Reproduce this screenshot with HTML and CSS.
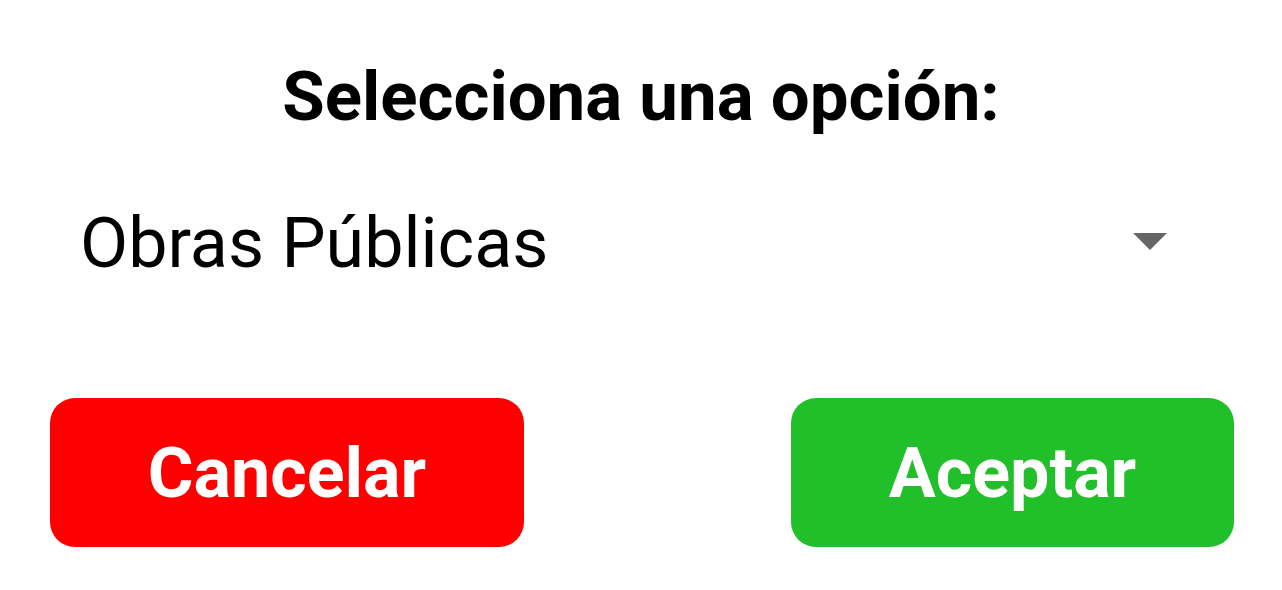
FILE: index.html
```html
<!DOCTYPE html>
<html lang="es">
<head>
<meta charset="utf-8">
<title>Selecciona una opción</title>
<link rel="stylesheet" href="styles.css">
</head>
<body>
<div class="dialog">
  <h1 class="title">Selecciona una opción:</h1>
  <div class="spinner">
    <span class="spinner-text">Obras Públicas</span>
    <svg class="spinner-arrow" width="34" height="17" viewBox="0 0 34 17"><path d="M0 0H34L17 17Z" fill="#666666"/></svg>
  </div>
  <div class="actions">
    <button class="btn btn-cancel">Cancelar</button>
    <button class="btn btn-accept">Aceptar</button>
  </div>
</div>
</body>
</html>
```

FILE: styles.css
```css
html, body {
  margin: 0;
  padding: 0;
  background: #ffffff;
}
.dialog {
  width: 1282px;
  height: 590px;
  font-family: Roboto, "Noto Sans", sans-serif;
  color: #000000;
  display: flex;
  flex-direction: column;
}
.title {
  margin: 55px 0 0 0;
  font-size: 69px;
  line-height: 84px;
  font-weight: 700;
  text-align: center;
}
.spinner {
  margin-top: 67px;
  padding: 0 115px 0 80px;
  display: flex;
  align-items: center;
  justify-content: space-between;
  height: 75px;
}
.spinner-text {
  font-size: 70px;
  line-height: 75px;
  font-weight: 400;
}
.spinner-arrow {
  display: block;
  margin-top: -5px;
}
.actions {
  margin-top: 117px;
  padding: 0 48px 0 50px;
  display: flex;
  justify-content: space-between;
}
.btn {
  border: none;
  height: 149px;
  border-radius: 25px;
  color: #ffffff;
  font-family: Roboto, "Noto Sans", sans-serif;
  font-weight: 700;
  font-size: 70px;
  padding: 0;
  display: flex;
  align-items: center;
  justify-content: center;
}
.btn-cancel {
  width: 474px;
  background: #ff0000;
}
.btn-accept {
  width: 443px;
  background: #21bf29;
}
```
